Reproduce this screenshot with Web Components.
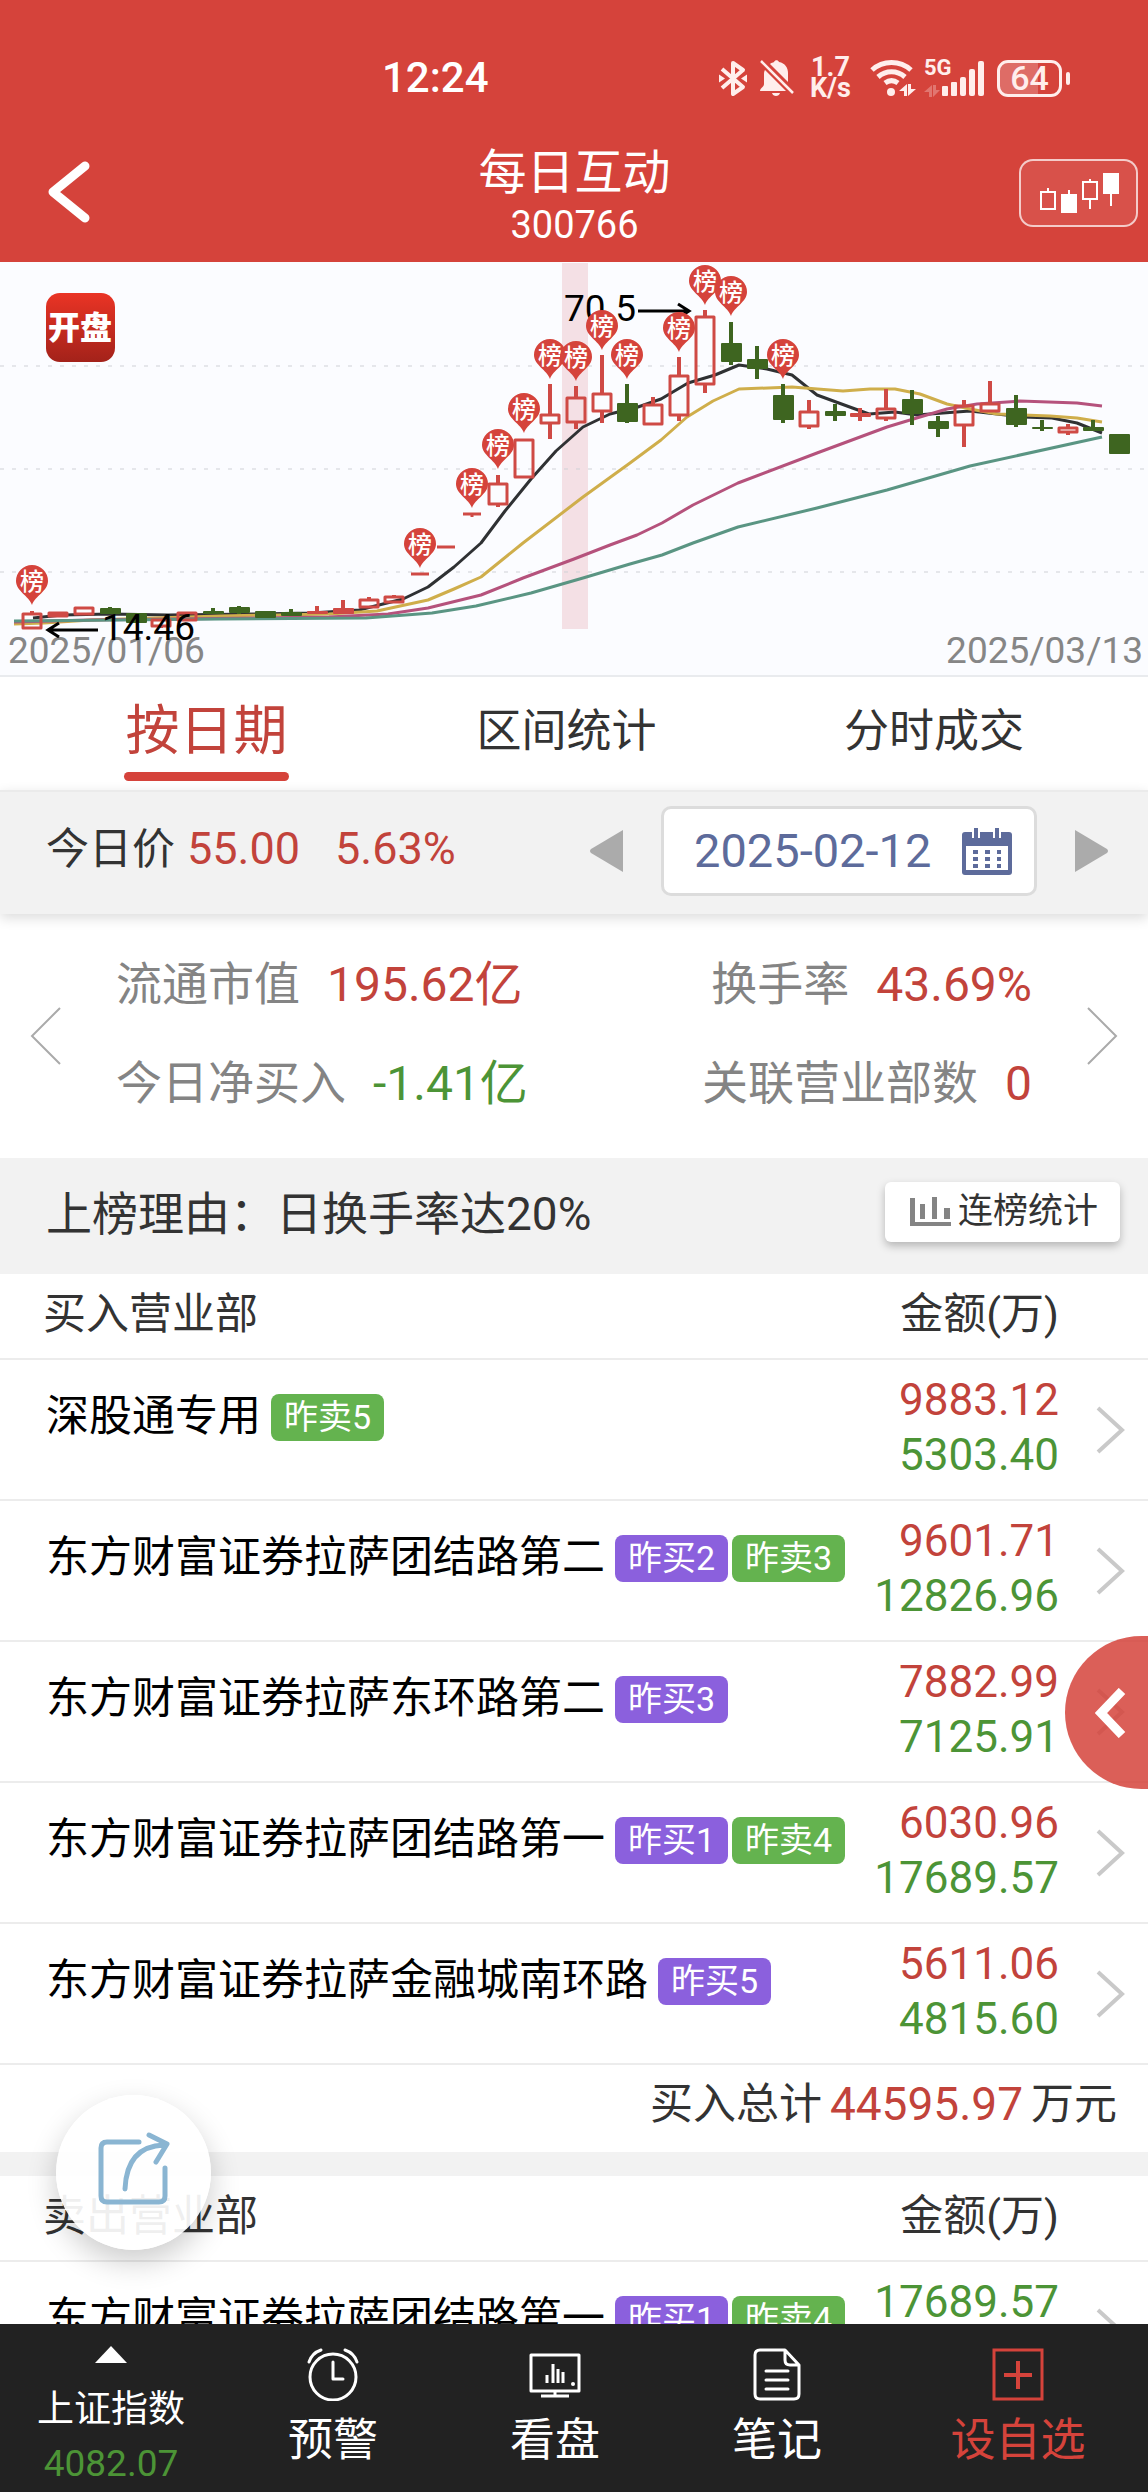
<!DOCTYPE html>
<html lang="zh-CN">
<head>
<meta charset="utf-8">
<meta name="viewport" content="width=device-width, initial-scale=1">
<title>每日互动 300766</title>
<style>
  :root {
    --red: #d5433b;
    --up: #c2433b;
    --down: #4c9436;
    --ink: #333;
    --muted: #848484;
    --strip: #f2f2f2;
    --line: #ececec;
  }
  html, body { margin: 0; height: 100%; }
  body { font-family: Roboto, "Noto Sans CJK SC", sans-serif; color: var(--ink); background: #fff; }
</style>
</head>
<body>
<stock-app></stock-app>

<script>
const RESET = `
  *, *::before, *::after { box-sizing: border-box; }
  button { font: inherit; color: inherit; background: none; border: 0; padding: 0; margin: 0; cursor: pointer; }
  a { color: inherit; text-decoration: none; }
  svg { display: block; flex: none; }
`;

function define(name, render) {
  customElements.define(name, class extends HTMLElement {
    constructor() {
      super();
      this.attachShadow({ mode: 'open' });
    }
    connectedCallback() {
      const template = document.createElement('template');
      template.innerHTML = `<style>${RESET}</style>` + render(this);
      this.shadowRoot.replaceChildren(template.content.cloneNode(true));
    }
  });
}

/* ---------- status bar ---------- */
define('status-bar', () => `
<style>
  :host { display: flex; justify-content: space-between; align-items: center; height: 110px; padding: 46px 78px 0 382px; color: #fff; }
  time { font-size: 42px; line-height: 48px; font-weight: 500; }
  .right { display: flex; align-items: center; color: #ffeeec; }
  .speed { font-size: 27px; line-height: 21px; font-weight: 700; text-align: center; margin: 0 17px 0 15px; }
  .signal { display: flex; align-items: flex-start; margin-left: 8px; }
  .signal span { width: 18px; margin-top: -3px; font-size: 22px; line-height: 22px; font-weight: 700; }
  .battery { display: flex; align-items: center; gap: 4px; margin-left: 13px; }
  .cell { display: flex; align-items: center; justify-content: center; width: 65px; height: 37px; border: 3px solid #ffeeec; border-radius: 11px; font-size: 34px; line-height: 34px; font-weight: 500;
    background: linear-gradient(90deg, rgba(255,255,255,.22) 65%, transparent 65%); }
  .nub { width: 4px; height: 13px; border-radius: 2px; background: #ffeeec; }
  .bell { margin-left: 11px; }
</style>
<time>12:24</time>
<div class="right">
  <svg width="30" height="37" viewBox="0 0 30 37" fill="none" stroke="currentColor" stroke-width="4" stroke-linejoin="round">
    <path d="M4 9 25 27 15 34V3L25 10 4 28"/><path d="M1 14.500 7 18.500 1 22.500ZM29 14.500 23 18.500 29 22.500Z" fill="currentColor" stroke="none"/>
  </svg>
  <svg class="bell" width="36" height="38" viewBox="0 0 36 38" fill="currentColor">
    <path d="M6 11 27 32H1c0-3 4-4 4-7V15c0-2 .4-3 1-4ZM11 5c1-1 3-1.500 4-2 1-2.500 4-2.500 5 0 6 1 9 6 9 11v9ZM13 34h8c-1 4-7 4-8 0Z"/>
    <path d="M2 2 34 34" stroke="currentColor" stroke-width="2.500"/>
  </svg>
  <div class="speed">1.7<br>K/s</div>
  <svg width="48" height="38" viewBox="0 0 48 38" fill="none" stroke="currentColor" stroke-width="5" stroke-linecap="round">
    <path d="M4 11c11-10 28-10 39 0M10 18c8-7 19-7 27 0M17 24c4-3 9-3 13 0" stroke-linecap="butt"/>
    <circle cx="23" cy="33" r="4" fill="currentColor" stroke="none"/>
    <path d="M31 32 39 25V37H36V32ZM40 25 43 25V30H48L40 37Z" fill="currentColor" stroke="none"/>
  </svg>
  <div class="signal"><span>5G</span>
    <svg width="42" height="37" viewBox="18 0 42 37" fill="currentColor" overflow="visible">
      <path d="M0 32 8 25V37H5V32ZM9 25H12V30H16L9 37Z" opacity=".3"/>
      <rect x="18" y="26" width="6" height="10" rx="1"/><rect x="27" y="22" width="6" height="14" rx="1"/><rect x="36" y="17" width="6" height="19" rx="2"/><rect x="45" y="9" width="6" height="27" rx="2"/><rect x="54" y="1" width="6" height="35" rx="2"/>
    </svg>
  </div>
  <div class="battery"><div class="cell">64</div><div class="nub"></div></div>
</div>`);

/* ---------- title bar ---------- */
define('title-bar', () => `
<style>
  :host { display: grid; grid-template-columns: 130px 1fr 120px; align-items: center; height: 152px; padding: 0 9px 0 0; color: #fff; }
  .back { padding: 22px 0 10px 45px; }
  .title { text-align: center; padding-top: 20px; }
  h1 { margin: 0; font-size: 48px; line-height: 58px; font-weight: 400; }
  p { margin: 0; font-size: 38px; line-height: 46px; }
  .chart { display: flex; align-items: center; justify-content: center; width: 119px; height: 68px; margin-top: 14px; border: 2px solid rgba(255,255,255,.7); border-radius: 14px; background: rgba(255,255,255,.08); }
</style>
<button class="back" type="button" aria-label="返回">
  <svg width="48" height="66" viewBox="0 0 48 66" fill="none" stroke="#fff" stroke-width="9" stroke-linecap="round" stroke-linejoin="round"><path d="M40 7 8 33 40 59"/></svg>
</button>
<div class="title"><h1><slot name="name"></slot></h1><p><slot name="code"></slot></p></div>
<button class="chart" type="button" aria-label="K线">
  <svg width="80" height="42" viewBox="0 0 80 42" fill="none" stroke="#fff" stroke-width="2">
    <path d="M2 20h14v17H2ZM9 16v4M44 10h14v17H44ZM51 7v3M51 27v10"/>
    <path d="M22 22h16v19H22ZM64 1h16v21H64Z" fill="#fff" stroke="none"/><path d="M30 18v4M72 22v12"/>
  </svg>
</button>`);

/* ---------- candlestick chart ---------- */
// [kind, body top, body bottom, high, low]; u = rising, f = rising filled, d = falling, l = limit-up dash
const CANDLES = [
  ['u',613,629,611,629],['u',612,617,612,617],['u',607,615,607,615],['d',608,614,607,614],['d',613,623,613,623],
  ['u',619,627,619,628],['u',612,621,612,621],['d',611,614,608,614],['d',607,613,606,614],['d',611,618,611,618],
  ['d',612,616,609,616],['f',611,614,606,614],['f',608,614,600,614],['u',599,608,597,608],['u',596,603,595,603],
  ['l',574,574,574,574],['l',547,547,547,547],['l',514,514,514,517],['u',483,505,475,507],['u',439,478,439,478],
  ['u',414,424,384,439],['u',397,423,386,429],['u',393,412,355,423],['d',403,422,384,423],['u',404,425,397,425],
  ['u',375,416,357,421],['u',316,385,310,393],['d',343,362,322,365],['d',359,369,346,379],['d',395,420,384,423],
  ['u',411,427,400,429],['d',411,416,404,421],['f',413,417,408,421],['u',408,419,389,421],['d',399,414,390,425],
  ['d',421,429,416,437],['u',405,426,400,447],['u',403,412,381,412],['d',408,425,395,427],['d',427,429,420,431],
  ['u',427,433,424,435],['d',427,431,420,431],['d',434,454,434,454]
];
const PINS = [[0,581],[15,544],[17,484],[18,445],[19,409],[20,355],[21,357],[22,326],[23,355],[25,328],[27,292],[26,281],[29,355]];
const AVERAGES = [
  ['#2f3133','33,618 62,615 110,614 168,615 256,614 311,613 359,610 403,599 428,587 454,567 481,543 505,511 531,479 556,451 583,427 610,414 638,407 661,399 688,383 715,375 739,365 767,369 792,375 817,395 847,406 869,414 895,412 917,415 943,413 970,411 997,414 1023,417 1052,418 1077,423 1102,433'],
  ['#cfae4b','14,624 44,623 91,620 220,616 329,614 377,611 428,600 454,589 481,577 523,543 583,497 630,463 661,440 687,417 713,401 739,389 792,387 843,391 870,389 895,389 920,394 947,404 970,409 997,414 1050,416 1077,418 1102,422'],
  ['#b5527c','14,622 91,620 329,617 388,614 428,608 481,595 523,578 574,559 610,545 637,535 662,523 693,505 738,483 817,453 887,427 920,417 947,409 977,404 1020,401 1077,403 1102,406'],
  ['#5a9583','14,621 220,619 366,618 432,613 476,606 531,593 583,578 630,564 662,555 693,543 738,527 817,508 887,490 970,466 1102,437']
];
const RISE = '#cf4a45', FALL = '#3e6520';
const candleX = i => Math.round(32 + 25.89 * i);

function candle([kind, top, bottom, high, low], i) {
  const x = candleX(i), color = kind === 'd' ? FALL : RISE;
  if (kind === 'l') return `<path d="M${x - 9} ${top}h18M${x} ${top}V${low}" stroke="${RISE}" stroke-width="3" fill="none"/>`;
  const wick = `<path d="M${x} ${high}V${top}M${x} ${bottom}V${low}" stroke="${color}" stroke-width="4"/>`;
  return kind === 'u'
    ? `${wick}<rect x="${x - 9}" y="${top + 1}" width="18" height="${bottom - top - 2}" fill="none" stroke="${color}" stroke-width="3" stroke-linejoin="round"/>`
    : `${wick}<rect x="${x - 10}" y="${top}" width="21" height="${bottom - top}" rx="1" fill="${color}"/>`;
}
function pin([i, y]) {
  return `<g transform="translate(${candleX(i)} ${y})"><path d="M0 24C-3 15-16 10-16 0a16 16 0 0 1 32 0C16 10 3 15 0 24Z" fill="#d5433b"/><text y="9" font-size="24" font-weight="500" fill="#fff" text-anchor="middle">榜</text></g>`;
}
define('k-line-chart', () => `
<style>
  :host { display: block; background: #fbfcff; border-bottom: 2px solid #e9ebee; }
  svg { width: 100%; height: auto; font-family: Roboto, "Noto Sans CJK SC", sans-serif; }
</style>
<svg viewBox="0 262 1148 413" role="img" aria-label="K线图">
  <defs><linearGradient id="app" x1="0" y1="0" x2="0" y2="1"><stop offset="0" stop-color="#ea3425"/><stop offset="1" stop-color="#a3221a"/></linearGradient></defs>
  <rect x="562" y="263" width="26" height="366" fill="#f4e0e5"/>
  <path d="M0 366H1148M0 469H1148M0 572H1148" stroke="#cfd1d6" stroke-width="1" stroke-dasharray="4 8"/>
  <g font-size="37" fill="#868686"><text x="8" y="663">2025/01/06</text><text x="1143" y="663" text-anchor="end">2025/03/13</text></g>
  ${AVERAGES.map(([c, p]) => `<polyline points="${p}" fill="none" stroke="${c}" stroke-width="3" stroke-linejoin="round"/>`).join('')}
  ${CANDLES.map(candle).join('')}
  <g font-size="37" fill="#000"><text x="564" y="321">70.5</text><text x="102" y="640">14.46</text></g>
  <path d="M638 311H688M678 304 689 311 678 318M98 630H49M59 623 48 630 59 637" fill="none" stroke="#000" stroke-width="3"/>
  ${PINS.map(pin).join('')}
  <rect x="46" y="293" width="69" height="69" rx="14" fill="url(#app)"/>
  <text x="80" y="339" font-size="32" font-weight="900" fill="#fff" text-anchor="middle">开盘</text>
</svg>`);

/* ---------- tabs ---------- */
define('tab-bar', () => `
<style>
  :host { display: block; background: #fff; }
  nav { display: flex; justify-content: space-between; height: 113px; padding: 0 124px; }
  button { font-size: 45px; line-height: 54px; padding: 28px 0 0; display: flex; flex-direction: column; align-items: center; }
  .on { font-size: 54px; color: var(--up); }
  .on::after { content: ""; width: 100%; min-width: 165px; height: 9px; margin-top: 13px; border-radius: 5px; background: var(--red); }
</style>
<nav role="tablist">
  <button class="on" type="button" role="tab" aria-selected="true">按日期</button>
  <button type="button" role="tab">区间统计</button>
  <button type="button" role="tab">分时成交</button>
</nav>`);

/* ---------- price and date ---------- */
define('date-bar', () => `
<style>
  :host { display: flex; align-items: center; justify-content: space-between; position: relative; height: 124px; padding: 0 40px 4px 46px; background: var(--strip); box-shadow: 0 4px 12px rgba(0,0,0,.14); border-top: 2px solid #ebebeb; }
  .price { display: flex; align-items: baseline; padding-bottom: 4px; font-size: 43px; line-height: 56px; }
  .price b { font-weight: 400; font-size: 45px; color: var(--up); margin-left: 12px; }
  .price b + b { margin-left: 35px; }
  .pick { display: flex; align-items: center; gap: 38px; }
  .date { display: flex; align-items: center; justify-content: space-between; width: 376px; height: 90px; padding: 0 22px 0 30px; background: #fff; border: 3px solid #dcdcdc; border-radius: 10px; font-size: 47px; color: #5d6b9b; }
  .date span { padding-bottom: 2px; }
</style>
<div class="price">今日价<b>55.00</b><b>5.63%</b></div>
<div class="pick">
  <button type="button" aria-label="前一天"><svg width="33" height="42" viewBox="0 0 33 42"><path d="M33 0V42L1 23Q-1 21 1 19Z" fill="#ababab"/></svg></button>
  <button class="date" type="button"><span>2025-02-12</span>
    <svg width="50" height="47" viewBox="0 0 50 47">
      <path d="M3 4H47Q50 4 50 7V44Q50 47 47 47H3Q0 47 0 44V7Q0 4 3 4Z" fill="#5d6b9b"/>
      <path d="M4 18H46V42H4Z" fill="#fff"/>
      <path d="M14 0V10M35 0V10" stroke="#fff" stroke-width="8"/><path d="M14 0V10M35 0V10" stroke="#5d6b9b" stroke-width="4"/>
      <path d="M11 24H39M11 31H39M11 38H39" stroke="#5d6b9b" stroke-width="4" stroke-dasharray="5 7"/>
    </svg>
  </button>
  <button type="button" aria-label="后一天"><svg width="33" height="42" viewBox="0 0 33 42"><path d="M0 0V42L32 23Q34 21 32 19Z" fill="#ababab"/></svg></button>
</div>`);

/* ---------- figures ---------- */
define('stat-panel', () => `
<style>
  :host { display: flex; align-items: center; justify-content: space-between; height: 244px; padding: 0 29px; background: #fff; }
  dl { flex: 1; display: grid; grid-template-columns: auto auto; justify-content: space-between; row-gap: 36px; margin: 0 0 5px; padding: 0 55px; }
  div { display: flex; align-items: center; gap: 27px; line-height: 63px; }
  div:nth-child(even) { justify-content: flex-end; }
  dt { font-size: 46px; color: var(--muted); }
  dd { margin: 0; font-size: 48px; color: var(--up); }
  .down { color: var(--down); }
</style>
<button type="button" aria-label="上一页"><svg width="32" height="58" viewBox="0 0 32 58" fill="none" stroke="#aaa" stroke-width="2"><path d="M31 1 3 29 31 57"/></svg></button>
<dl>
  <div><dt>流通市值</dt><dd>195.62亿</dd></div>
  <div><dt>换手率</dt><dd>43.69%</dd></div>
  <div><dt>今日净买入</dt><dd class="down">-1.41亿</dd></div>
  <div><dt>关联营业部数</dt><dd>0</dd></div>
</dl>
<button type="button" aria-label="下一页"><svg width="32" height="58" viewBox="0 0 32 58" fill="none" stroke="#aaa" stroke-width="2"><path d="M1 1 29 29 1 57"/></svg></button>`);

/* ---------- listing reason ---------- */
define('reason-bar', () => `
<style>
  :host { display: flex; align-items: center; justify-content: space-between; height: 116px; padding: 0 28px 0 46px; background: var(--strip); }
  p { margin: 0; font-size: 46px; line-height: 60px; padding-bottom: 4px; }
  button { display: flex; align-items: center; gap: 6px; height: 60px; margin-bottom: 8px; padding: 0 22px 0 25px; font-size: 35px; line-height: 50px; background: #fff; border-radius: 6px; box-shadow: 0 4px 8px rgba(0,0,0,.25); }
</style>
<p><slot></slot></p>
<button type="button"><svg width="42" height="30" viewBox="0 0 42 30" fill="#848484"><path d="M0 1H5V25H41V29H0ZM10 7H15V22H10ZM22 0H27V22H22ZM34 11H40V22H34Z"/></svg>连榜统计</button>`);

/* ---------- branch tables ---------- */
const BUYERS = [
  ['深股通专用', ['昨卖5'], '9883.12', '5303.40'],
  ['东方财富证券拉萨团结路第二', ['昨买2', '昨卖3'], '9601.71', '12826.96'],
  ['东方财富证券拉萨东环路第二', ['昨买3'], '7882.99', '7125.91'],
  ['东方财富证券拉萨团结路第一', ['昨买1', '昨卖4'], '6030.96', '17689.57'],
  ['东方财富证券拉萨金融城南环路', ['昨买5'], '5611.06', '4815.60']
];
const SELLERS = [['东方财富证券拉萨团结路第一', ['昨买1', '昨卖4'], '', '17689.57']];

define('trade-tag', host => `
<style>
  :host { display: inline-block; min-width: 113px; padding: 0 13px; border-radius: 8px; font-size: 34px; line-height: 47px; text-align: center; white-space: nowrap; color: #fff; background: ${host.textContent.includes('买') ? '#8b60dd' : '#64b34f'}; }
</style><slot></slot>`);

define('branch-table', host => {
  const rows = host.getAttribute('side') === 'buy' ? BUYERS : SELLERS;
  return `
<style>
  :host { display: block; background: #fff; }
  table { width: 100%; border-spacing: 0; }
  th, td { padding: 0; border-bottom: 2px solid var(--line); font-weight: 400; }
  th { height: 86px; font-size: 43px; line-height: 60px; padding-bottom: 4px; text-align: left; }
  th:first-child { padding-left: 43px; }
  th:nth-child(2) { text-align: right; }
  td { height: 141px; vertical-align: top; color: #000; }
  .branch { display: flex; align-items: center; gap: 4px; padding: 34px 0 0 46px; font-size: 43px; line-height: 47px; white-space: nowrap; }
  .branch a { margin: -3px 6px 0 0; }
  .amount { text-align: right; font-size: 44px; line-height: 55px; padding-top: 13px; }
  .amount span { display: block; }
  .up { color: var(--up); } .down { color: var(--down); }
  .go { width: 89px; padding: 46px 0 0 37px; }
</style>
<table>
  <thead><tr><th scope="col"><slot></slot></th><th scope="col">金额(万)</th><th></th></tr></thead>
  <tbody>${rows.map(([name, tags, buy, sell]) => `
    <tr>
      <td><div class="branch"><a href="#">${name}</a>${tags.map(t => `<trade-tag>${t}</trade-tag>`).join('')}</div></td>
      <td class="amount">${buy ? `<span class="up">${buy}</span>` : ''}<span class="down">${sell}</span></td>
      <td class="go"><svg width="30" height="48" viewBox="0 0 30 48" fill="none" stroke="#c9c9c9" stroke-width="4"><path d="M2 2 26 24 2 46"/></svg></td>
    </tr>`).join('')}</tbody>
</table>`;
});

define('total-row', () => `
<style>
  :host { display: flex; align-items: center; justify-content: flex-end; gap: 8px; height: 111px; padding: 0 31px 10px 0; box-sizing: border-box; font-size: 43px; line-height: 60px; background: #fff; border-bottom: 24px solid var(--strip); }
  b { font-weight: 400; font-size: 46px; color: var(--up); }
</style>
<span>买入总计</span><b><slot></slot></b><span>万元</span>`);

/* ---------- floating buttons ---------- */
define('side-handle', () => `
<style>
  :host { position: absolute; right: 0; top: 1636px; z-index: 2; }
  button { display: flex; align-items: center; width: 83px; height: 153px; padding-left: 30px; border-radius: 77px 0 0 77px; background: rgba(213,67,59,.85); }
</style>
<button type="button" aria-label="展开"><svg width="32" height="50" viewBox="0 0 32 50" fill="none" stroke="#fff" stroke-width="9"><path d="M27 3 6 25 27 47"/></svg></button>`);

define('share-button', () => `
<style>
  :host { position: absolute; left: 56px; bottom: 242px; z-index: 2; }
  button { display: flex; align-items: center; justify-content: center; width: 155px; height: 155px; padding-bottom: 8px; border-radius: 50%; background: rgba(255,255,255,.92); box-shadow: 0 12px 30px rgba(0,0,0,.2); }
</style>
<button type="button" aria-label="分享"><svg width="72" height="76" viewBox="0 0 72 76" fill="none" stroke="#8ab5d2" stroke-width="5" stroke-linecap="round" stroke-linejoin="round">
  <path d="M41 11H9Q3 11 3 17V65Q3 71 9 71H61Q67 71 67 65V37"/><path d="M27 58C28 33 38 15 66 14M51 4 69 13 58 31"/>
</svg></button>`);

/* ---------- bottom navigation ---------- */
define('bottom-nav', () => `
<style>
  :host { display: block; flex: none; position: relative; z-index: 3; background: #222; color: #fff; }
  nav { display: grid; grid-template-columns: 222fr 222fr 222fr 222fr 260fr; height: 168px; }
  a { display: flex; flex-direction: column; align-items: center; padding-top: 23px; font-size: 45px; line-height: 60px; }
  a svg { margin-bottom: 10px; }
  .index { padding-top: 22px; font-size: 37px; line-height: 54px; }
  .index svg { margin-bottom: 20px; }
  .index span { color: var(--down); }
  .add { color: var(--red); }
</style>
<nav>
  <a class="index" href="#"><svg width="32" height="17" viewBox="0 0 32 17"><path d="M16 0 32 17H0Z" fill="#fff"/></svg>上证指数<span>4082.07</span></a>
  <a href="#"><svg width="54" height="54" viewBox="0 0 54 54" fill="none" stroke="#fff" stroke-width="3" stroke-linecap="round" stroke-linejoin="round"><circle cx="27" cy="30" r="23"/><path d="M27 15V32H37M3 15Q6 6 15 3M51 15Q48 6 39 3"/></svg>预警</a>
  <a href="#"><svg width="54" height="54" viewBox="0 0 54 54" fill="none" stroke="#fff" stroke-width="3" stroke-linejoin="round"><path d="M3 8H51V44H3ZM27 44V49M13 49H41M19 28V36M25 17V36M30 22V36M35 25V36"/><circle cx="45" cy="37" r="2" fill="#fff" stroke="none"/></svg>看盘</a>
  <a href="#"><svg width="54" height="54" viewBox="0 0 54 54" fill="none" stroke="#fff" stroke-width="3" stroke-linecap="round" stroke-linejoin="round"><path d="M10 3H35L49 18V47Q49 52 44 52H10Q5 52 5 47V8Q5 3 10 3ZM35 3V13Q35 18 40 18H49M16 24H38M16 33H38M16 42H38"/></svg>笔记</a>
  <a class="add" href="#"><svg width="54" height="54" viewBox="0 0 54 54" fill="none" stroke="currentColor" stroke-width="3"><path d="M3 3H51V52H3Z"/><path d="M27 14V42M13 28H41" stroke-width="4"/></svg>设自选</a>
</nav>`);

/* ---------- page ---------- */
define('stock-app', () => `
<style>
  :host { display: flex; flex-direction: column; height: 100vh; position: relative; overflow: hidden; }
  header { flex: none; background: var(--red); }
  status-bar, title-bar, date-bar, stat-panel, reason-bar { box-sizing: border-box; }
  main { flex: 1; min-height: 0; overflow: hidden; }
</style>
<header>
  <status-bar></status-bar>
  <title-bar><span slot="name">每日互动</span><span slot="code">300766</span></title-bar>
</header>
<main>
  <k-line-chart></k-line-chart>
  <tab-bar></tab-bar>
  <date-bar></date-bar>
  <stat-panel></stat-panel>
  <reason-bar>上榜理由：日换手率达20%</reason-bar>
  <branch-table side="buy">买入营业部</branch-table>
  <total-row>44595.97</total-row>
  <branch-table side="sell">卖出营业部</branch-table>
</main>
<side-handle></side-handle>
<share-button></share-button>
<bottom-nav></bottom-nav>`);
</script>
</body>
</html>
